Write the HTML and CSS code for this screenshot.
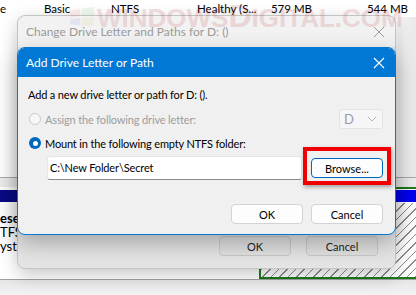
FILE: index.html
```html
<!DOCTYPE html>
<html>
<head>
  <title>Add Drive Letter or Path</title>
  <link rel="stylesheet" href="styles.css">
</head>
<body>
  <div class="desk">
    <!-- Disk Management behind the dialogs -->
    <div class="vol-row">
      <span>e</span>
      <span>Basic</span>
      <span>NTFS</span>
      <span>Healthy (S...</span>
      <span class="num">579 MB</span>
      <span class="num">544 MB</span>
    </div>
    <div class="vol-blank"></div>
    <div class="map-top"></div>
    <div class="disk-map">
      <div class="part part-left">
        <div class="part-head navy"></div>
        <div class="part-body">
          <div class="bold">ese</div>
          <div>TFS</div>
          <div>yste</div>
        </div>
      </div>
      <div class="part part-free">
        <div class="part-head blue"></div>
        <div class="part-body hatch"></div>
      </div>
    </div>
    <div class="map-bottom"></div>

    <!-- Outer dialog -->
    <div class="window outer">
      <div class="outer-title">
        <span>Change Drive Letter and Paths for D: ()</span>
        <svg class="close" width="12" height="12" viewBox="0 0 12 12"><path d="M1 1L11 11M11 1L1 11" stroke="#9a9a9a" stroke-width="1"/></svg>
      </div>
      <div class="outer-body"></div>
      <div class="btn-row outer-btns">
        <button class="btn btn-dim">OK</button>
        <button class="btn btn-dim">Cancel</button>
      </div>
    </div>

    <!-- Inner (active) dialog -->
    <div class="window inner">
      <div class="inner-title">
        <span>Add Drive Letter or Path</span>
        <svg class="close" width="12" height="12" viewBox="0 0 12 12"><path d="M1 1L11 11M11 1L1 11" stroke="#ffffff" stroke-width="1.1"/></svg>
      </div>
      <div class="inner-body">
        <div class="intro">Add a new drive letter or path for D: ().</div>
        <div class="opt-row">
          <span class="radio radio-off"></span>
          <span class="opt-text dim">Assign the following drive letter:</span>
          <div class="select">
            <span>D</span>
            <svg width="10" height="6" viewBox="0 0 10 6"><path d="M1 1L5 5L9 1" fill="none" stroke="#b5b5b5" stroke-width="1"/></svg>
          </div>
        </div>
        <div class="opt-row opt-mount">
          <span class="radio radio-on"></span>
          <span class="opt-text">Mount in the following empty NTFS folder:</span>
        </div>
        <div class="path-row">
          <div class="textbox">C:\New Folder\Secret</div>
          <button class="btn btn-focus">Browse...</button>
        </div>
        <div class="btn-row inner-btns">
          <button class="btn">OK</button>
          <button class="btn">Cancel</button>
        </div>
      </div>
    </div>

    <!-- red annotation around Browse -->
    <div class="highlight"></div>

    <!-- site watermark -->
    <div class="watermark">
      <svg width="28" height="20" viewBox="0 0 30 22">
        <path d="M2 4L13 2L13 10L2 11Z" fill="#e88080"/>
        <path d="M15 2L28 0L28 9L15 10Z" fill="#80c080"/>
        <path d="M2 13L13 12L13 20L2 19Z" fill="#8090e0"/>
        <path d="M15 12L28 11L28 21L15 20Z" fill="#e0c070"/>
      </svg>
      <span class="wm-text">WINDOWS<span class="wm-big">D</span>IGITAL.COM</span>
    </div>
  </div>
</body>
</html>
```

FILE: styles.css
```css
/* Page */
body {
  margin: 0;
  padding: 0;
  font-family: Lato, "Liberation Sans", Arial, sans-serif;
  font-size: 12px;
  color: #000;
}

.desk {
  position: relative;
  width: 416px;
  height: 295px;
  overflow: hidden;
  background: #ffffff;
  display: flex;
  flex-direction: column;
}

/* Disk Management background */
.vol-row {
  height: 17px;
  display: grid;
  grid-template-columns: 44px 67px 86px 70px 45px 96px;
  align-items: center;
  white-space: nowrap;
  font-size: 11.5px;
}

.vol-row .num {
  text-align: right;
}

.vol-blank {
  height: 160px;
  background: linear-gradient(to right, #fff 0, #fff 396px, #f4f4f4 400px, #e9e9e9 416px);
}

.map-top {
  height: 9px;
  border-top: 1px solid #a9a9a9;
  background: #ececec;
}

.disk-map {
  height: 92px;
  display: flex;
}

.part {
  display: flex;
  flex-direction: column;
}

.part-left {
  width: 259px;
  padding-top: 3px;
  background: #fff;
}

.part-free {
  flex: 1;
  border: 2px solid #1c7a1c;
  border-right: none;
  padding-top: 1px;
}

.part-head {
  height: 12px;
}

.navy {
  background: #0a0a86;
}

.blue {
  background: #0000f0;
}

.part-body {
  flex: 1;
  padding-top: 9px;
  line-height: 14px;
  font-size: 13px;
  white-space: nowrap;
}

.bold {
  font-weight: bold;
}

.hatch {
  padding: 0;
  margin-top: 1px;
  background: repeating-linear-gradient(135deg, #ffffff 0, #ffffff 5px, #8a8a8a 5px, #8a8a8a 6px);
}

.map-bottom {
  flex: 1;
  border-top: 1px solid #a0a0a0;
  background: linear-gradient(#e6e6e6, #f3f3f3);
}

/* Windows */
.window {
  position: absolute;
  left: 17px;
  width: 379px;
  box-sizing: border-box;
  border-radius: 8px;
}

.outer {
  top: 15px;
  height: 254px;
  background: #e4e4e4;
  border: 1px solid #c4c4c4;
  box-shadow: 0 6px 18px rgba(0, 0, 0, 0.22);
  display: flex;
  flex-direction: column;
}

.outer-title {
  height: 31px;
  padding: 0 9px 0 8px;
  display: flex;
  justify-content: space-between;
  align-items: center;
  color: #9a9a9a;
  background: #f2f2f2;
  border-radius: 8px 8px 0 0;
}

.outer-body {
  flex: 1;
}

.btn-row {
  display: flex;
  justify-content: flex-end;
}

.outer-btns {
  gap: 15px;
  padding: 0 17px 12px 0;
}

.inner {
  top: 47px;
  height: 188px;
  background: #f0f0f0;
  border: 1px solid #0078d4;
  box-shadow: 0 8px 22px rgba(0, 0, 0, 0.28);
  overflow: hidden;
}

.inner-title {
  height: 29px;
  padding: 0 9px 0 8px;
  display: flex;
  justify-content: space-between;
  align-items: center;
  color: #ffffff;
  background: #0078d4;
}

.close {
  margin-right: 1px;
}

.inner-body {
  padding: 10px 12px 0 10px;
  font-size: 11px;
  letter-spacing: -0.15px;
}

.intro {
  line-height: 16px;
}

.opt-row {
  display: flex;
  align-items: center;
  height: 20px;
  margin-top: 6px;
}

.opt-mount {
  margin-top: 4px;
}

.radio {
  width: 12px;
  height: 12px;
  box-sizing: border-box;
  border-radius: 50%;
  margin: 0 4px 0 1px;
}

.radio-off {
  border: 1px solid #c9c9c9;
  background: #f7f7f7;
}

.radio-on {
  background: #0067c0;
  display: flex;
  align-items: center;
  justify-content: center;
}

.radio-on::after {
  content: "";
  width: 5px;
  height: 5px;
  border-radius: 50%;
  background: #fff;
}

.dim {
  color: #9d9d9d;
}

.opt-text {
  flex: 1;
}

.select {
  width: 44px;
  height: 20px;
  box-sizing: border-box;
  border: 1px solid #e3e3e3;
  border-radius: 3px;
  background: #f6f6f6;
  display: flex;
  align-items: center;
  justify-content: space-between;
  padding: 0 5px 0 4px;
  color: #9a9aa8;
  font-size: 13px;
}

.path-row {
  display: flex;
  align-items: center;
  margin: 3px 0 0 19px;
}

.textbox {
  width: 255px;
  height: 24px;
  box-sizing: border-box;
  background: #fff;
  border: 1px solid #e5e5e5;
  border-bottom-color: #8a8a8a;
  border-radius: 3px;
  padding: 0 2px;
  line-height: 22px;
  margin-right: 9px;
}

/* Buttons */
.btn {
  width: 72px;
  height: 20px;
  box-sizing: border-box;
  font-family: inherit;
  font-size: 11px;
  color: #000;
  background: #fdfdfd;
  border: 1px solid #d3d3d3;
  border-radius: 4px;
  padding: 0;
}

.btn-focus {
  border-color: #0067c0;
}

.btn-dim {
  background: #e0e0e0;
  border-color: #c8c8c8;
  color: #222;
}

.inner-btns {
  gap: 8px;
  margin-top: 24px;
}

/* Red annotation */
.highlight {
  position: absolute;
  left: 303px;
  top: 147px;
  width: 88px;
  height: 38px;
  box-sizing: border-box;
  border: 4px solid #f00000;
  box-shadow: 1px 2px 4px rgba(0, 0, 0, 0.35);
}

/* Watermark */
.watermark {
  position: absolute;
  left: 68px;
  top: 0;
  display: flex;
  align-items: center;
  gap: 1px;
  opacity: 0.13;
  color: #b01818;
  font-family: "Liberation Sans", sans-serif;
  font-weight: bold;
  font-size: 26px;
  line-height: 32px;
  white-space: nowrap;
  pointer-events: none;
}

.wm-big {
  font-size: 32px;
}
```
